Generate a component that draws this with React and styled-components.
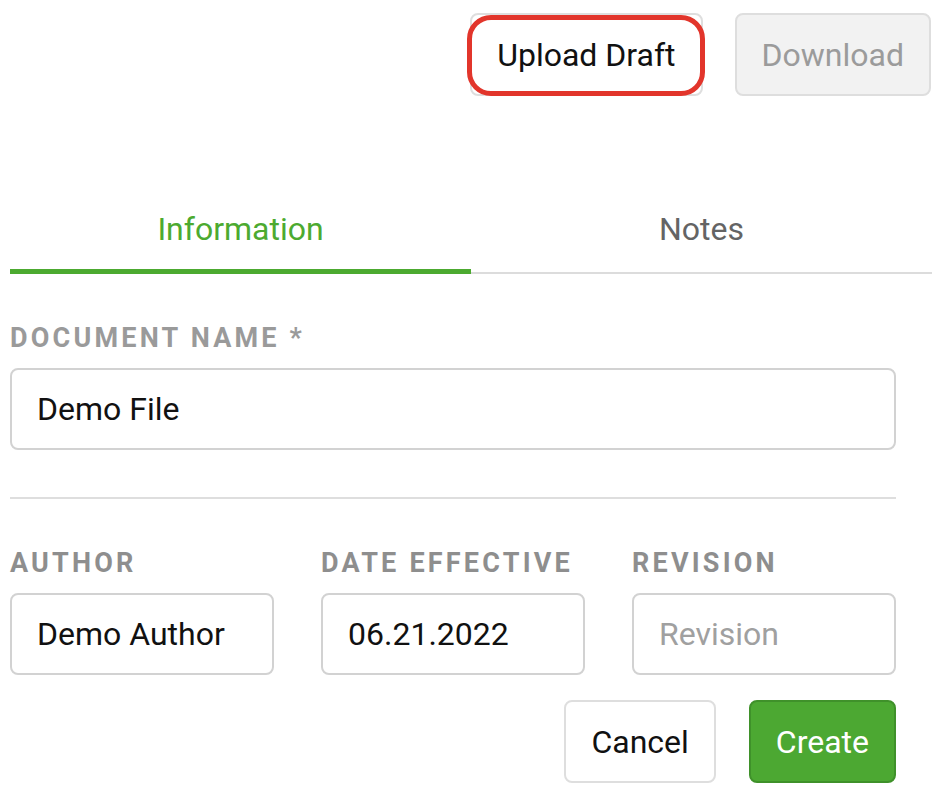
import styled, { createGlobalStyle } from "styled-components";

const GlobalStyle = createGlobalStyle`
  body {
    margin: 0;
    background: #fff;
    font-family: Roboto, "Liberation Sans", sans-serif;
  }
`;

const Container = styled.div`
  width: 946px;
  padding: 13px 0 0 10px;
  box-sizing: border-box;
`;

const TopBar = styled.div`
  display: flex;
  justify-content: flex-end;
  gap: 32px;
  padding-right: 15px;
`;

const Button = styled.button`
  position: relative;
  height: 83px;
  padding: 0 25px;
  border: 2px solid ${(p) => (p.$primary ? "#3f912a" : "#dedede")};
  border-radius: 8px;
  background: ${(p) => (p.$primary ? "#4ca832" : p.$disabled ? "#f2f2f2" : "#fff")};
  color: ${(p) => (p.$primary ? "#fff" : p.$disabled ? "#9b9b9b" : "#111")};
  font-family: Roboto, "Liberation Sans", sans-serif;
  font-size: 32px;
  cursor: pointer;
`;

const Highlight = styled.span`
  position: absolute;
  top: 0;
  left: -5px;
  right: -4px;
  bottom: -2px;
  border: 5px solid #e2352b;
  border-radius: 24px;
  pointer-events: none;
`;

const Tabs = styled.div`
  display: flex;
  width: 922px;
  margin-top: 88px;
`;

const Tab = styled.div`
  flex: 1;
  text-align: center;
  font-size: 32px;
  line-height: 38px;
  padding-top: 26px;
  padding-bottom: ${(p) => (p.$active ? "21px" : "24px")};
  color: ${(p) => (p.$active ? "#4caa30" : "#646464")};
  border-bottom: ${(p) => (p.$active ? "5px solid #4caa30" : "2px solid #dcdcdc")};
  cursor: pointer;
`;

const Form = styled.div`
  width: 886px;
`;

const Label = styled.div`
  font-size: 27px;
  line-height: 32px;
  font-weight: 700;
  letter-spacing: 3.2px;
  color: ${(p) => p.color || "#9a9a9a"};
  text-transform: uppercase;
  margin-bottom: 14px;
  white-space: nowrap;
`;

const Field = styled.div`
  margin-top: ${(p) => p.$top || "48px"};
`;

const Input = styled.input`
  width: 100%;
  height: 82px;
  box-sizing: border-box;
  border: 2px solid #d2d2d2;
  border-radius: 8px;
  padding: 0 25px;
  font-family: Roboto, "Liberation Sans", sans-serif;
  font-size: 32px;
  color: #111;
  outline: none;

  &::placeholder {
    color: #a0a0a0;
  }
`;

const Divider = styled.div`
  height: 2px;
  background: #dedede;
  margin-top: 47px;
`;

const Row = styled.div`
  display: grid;
  grid-template-columns: repeat(3, 1fr);
  column-gap: 47px;
  margin-top: 48px;
`;

const Actions = styled.div`
  display: flex;
  justify-content: flex-end;
  gap: 33px;
  margin-top: 25px;
`;

const App = () => {
  return (
    <Container>
      <GlobalStyle />
      <TopBar>
        <Button>
          Upload Draft
          <Highlight />
        </Button>
        <Button $disabled>Download</Button>
      </TopBar>

      <Tabs>
        <Tab $active>Information</Tab>
        <Tab>Notes</Tab>
      </Tabs>

      <Form>
        <Field>
          <Label>Document Name *</Label>
          <Input defaultValue="Demo File" />
        </Field>

        <Divider />

        <Row>
          <div>
            <Label color="#8e8e8e">Author</Label>
            <Input defaultValue="Demo Author" />
          </div>
          <div>
            <Label color="#8e8e8e">Date Effective</Label>
            <Input defaultValue="06.21.2022" />
          </div>
          <div>
            <Label color="#8e8e8e">Revision</Label>
            <Input placeholder="Revision" />
          </div>
        </Row>

        <Actions>
          <Button>Cancel</Button>
          <Button $primary>Create</Button>
        </Actions>
      </Form>
    </Container>
  );
};

export default App;
